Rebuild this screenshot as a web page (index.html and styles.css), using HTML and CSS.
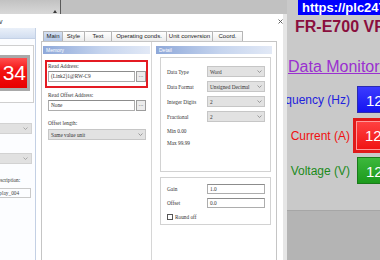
FILE: index.html
```html
<!DOCTYPE html>
<html>
<head>
<meta charset="utf-8">
<link rel="stylesheet" href="styles.css">
</head>
<body>
<div class="desktop">
  <div class="upper">
    <div class="behind">
      <div class="strip">
        <div class="strip-a"><svg class="tri" width="4" height="3" viewBox="0 0 4 3"><path d="M0 3 L2 0 L4 3 Z" fill="#3a3a3a"/></svg></div>
        <div class="strip-b"></div>
      </div>
    </div>
    <div class="page">
      <div class="banner">https://plc247.com</div>
      <h1 class="title">FR-E700 VFD</h1>
      <a class="link">Data Monitoring</a>
      <div class="meter m1">
        <div class="mlabel c-blue"><span>Frequency (Hz)</span></div>
        <div class="mval v-blue">12.5</div>
      </div>
      <div class="meter m2">
        <div class="mlabel c-red"><span>Current (A)</span></div>
        <div class="mval v-red">12.3</div>
      </div>
      <div class="meter m3">
        <div class="mlabel c-green"><span>Voltage (V)</span></div>
        <div class="mval v-green">12.0</div>
      </div>
    </div>
  </div>
  <div class="lower"></div>
</div>

<div class="dialog">
  <div class="titlebar">
    <span class="ttl">v</span>
    <svg class="close" width="5" height="5" viewBox="0 0 5 5"><path d="M0.5 0.5 L4.5 4.5 M4.5 0.5 L0.5 4.5" stroke="#555" stroke-width="0.9"/></svg>
  </div>
  <div class="dbody">
    <div class="side">
      <div class="side-head"></div>
      <div class="side-in">
        <div class="disp"><div class="red34">34</div></div>
        <div class="dd"><svg width="5" height="3" viewBox="0 0 5 3"><path d="M0.5 0.5 L2.5 2.5 L4.5 0.5" fill="none" stroke="#999" stroke-width="0.8"/></svg></div>
        <div class="dd dd2"><svg width="5" height="3" viewBox="0 0 5 3"><path d="M0.5 0.5 L2.5 2.5 L4.5 0.5" fill="none" stroke="#999" stroke-width="0.8"/></svg></div>
        <div class="slbl">Description:</div>
        <div class="stxt">Display_004</div>
      </div>
    </div>
    <div class="panel">
      <div class="tabs">
        <div class="tab on">Main</div>
        <div class="tab">Style</div>
        <div class="tab">Text</div>
        <div class="tab">Operating conds.</div>
        <div class="tab">Unit conversion</div>
        <div class="tab">Coord.</div>
      </div>
      <div class="content">
        <div class="mem">
          <div class="ghead">Memory</div>
          <div class="redgrp">
            <div class="lbl">Read Address:</div>
            <div class="irow">
              <div class="inp">(Link2)1@RW-C9</div>
              <div class="btn">...</div>
            </div>
          </div>
          <div class="fields">
            <div class="lbl l1">Read Offset Address:</div>
            <div class="irow">
              <div class="inp">None</div>
              <div class="btn">...</div>
            </div>
            <div class="lbl l2">Offset length:</div>
            <div class="sel wide"><span>Same value unit</span><svg width="5" height="3" viewBox="0 0 5 3"><path d="M0.5 0.5 L2.5 2.5 L4.5 0.5" fill="none" stroke="#888" stroke-width="0.8"/></svg></div>
          </div>
        </div>
        <div class="det">
          <div class="ghead">Detail</div>
          <div class="box">
            <div class="grid">
              <span class="lab">Data Type</span>
              <div class="sel"><span>Word</span><svg width="5" height="3" viewBox="0 0 5 3"><path d="M0.5 0.5 L2.5 2.5 L4.5 0.5" fill="none" stroke="#888" stroke-width="0.8"/></svg></div>
              <span class="lab">Data Format</span>
              <div class="sel"><span>Unsigned Decimal</span><svg width="5" height="3" viewBox="0 0 5 3"><path d="M0.5 0.5 L2.5 2.5 L4.5 0.5" fill="none" stroke="#888" stroke-width="0.8"/></svg></div>
              <span class="lab">Integer Digits</span>
              <div class="sel"><span>2</span><svg width="5" height="3" viewBox="0 0 5 3"><path d="M0.5 0.5 L2.5 2.5 L4.5 0.5" fill="none" stroke="#888" stroke-width="0.8"/></svg></div>
              <span class="lab">Fractional</span>
              <div class="sel"><span>2</span><svg width="5" height="3" viewBox="0 0 5 3"><path d="M0.5 0.5 L2.5 2.5 L4.5 0.5" fill="none" stroke="#888" stroke-width="0.8"/></svg></div>
            </div>
            <div class="note first">Min 0.00</div>
            <div class="note">Max 99.99</div>
          </div>
          <div class="box box2">
            <div class="grid grid2">
              <span class="lab">Gain</span>
              <div class="inp tin">1.0</div>
              <span class="lab">Offset</span>
              <div class="inp tin">0.0</div>
            </div>
            <div class="chk"><span class="cb"></span><span class="lab">Round off</span></div>
          </div>
        </div>
      </div>
    </div>
  </div>
</div>
</body>
</html>
```

FILE: styles.css
```css
* { box-sizing: border-box; }
html, body { margin: 0; padding: 0; }
body {
  width: 380px;
  height: 260px;
  overflow: hidden;
  position: relative;
  background: #c9c9c9;
  font-family: "Liberation Sans", Arial, sans-serif;
}

/* background desktop / web page */
.desktop { display: flex; flex-direction: column; height: 260px; }
.upper { display: grid; grid-template-columns: 287px 93px; height: 210px; }
.strip { display: flex; height: 14px; }
.strip-a {
  width: 61px;
  border-right: 1px solid #5a5a5a;
  background: linear-gradient(#c2c2c2, #d8d8d8);
  display: flex;
  justify-content: flex-end;
  align-items: flex-end;
  padding: 0 3px 1px 0;
}
.strip-b { flex: 1; background: #c1c1c1; }
.page { white-space: nowrap; min-width: 0; }
.banner {
  margin-left: 11px;
  height: 15px;
  background: #0000fe;
  color: #fff;
  font-weight: bold;
  font-size: 13px;
  line-height: 15px;
  padding-left: 4px;
  overflow: hidden;
}
.title {
  margin: 3px 0 0;
  padding-left: 8px;
  font-size: 16px;
  line-height: 18px;
  font-weight: bold;
  color: #8a0f3e;
}
.link {
  display: block;
  margin-top: 22px;
  padding-left: 1px;
  font-size: 16px;
  line-height: 18px;
  color: #9a30d0;
  text-decoration: underline;
}
.meter { display: flex; align-items: center; gap: 7px; height: 27px; }
.m1 { margin-top: 10px; }
.m2 { margin-top: 9px; }
.m3 { margin-top: 8px; }
.mlabel {
  width: 63px;
  flex: none;
  display: flex;
  justify-content: flex-end;
  font-size: 12px;
}
.c-blue { color: #2222dd; }
.c-red { color: #f01010; }
.c-green { color: #1b8a1b; }
.mval {
  width: 40px;
  flex: none;
  height: 27px;
  color: #fff;
  font-size: 15px;
  line-height: 27px;
  padding-left: 8px;
}
.v-blue { background: linear-gradient(#3b3bff, #1414f0); border: 1px solid #2a2ab0; }
.v-red {
  background: linear-gradient(#ff4040, #f01414);
  box-shadow: 0 0 0 1px #ff9a9a, 0 0 0 4px #e01a1a;
}
.v-green { background: linear-gradient(#3cb83c, #1c9a1c); border: 1px solid #1a7a1a; }
.lower { flex: 1; background: #b4b4b4; border-top: 1px solid #a6a6a6; }

/* dialog window */
.dialog {
  position: absolute;
  left: 0;
  top: 14px;
  width: 287px;
  height: 246px;
  background: #fff;
  border-right: 4px solid #e6e6e6;
  display: flex;
  flex-direction: column;
}
.titlebar {
  height: 14px;
  flex: none;
  display: flex;
  justify-content: space-between;
  align-items: center;
}
.ttl { font-size: 7px; color: #333; margin-left: -1px; }
.dbody { flex: 1; display: flex; min-height: 0; }

.side {
  width: 36px;
  flex: none;
  border-right: 1px solid #c3d0e4;
  background: #fcfdff;
  overflow: hidden;
}
.side-head {
  height: 11px;
  background: linear-gradient(#eaf0f9, #d2def0);
  border-bottom: 1px solid #c4d1e6;
}
.side-in { margin-left: -12px; width: 46px; }
.disp {
  margin-top: 6px;
  border: 1px solid #cfcfcf;
  padding: 9px 3px 11px 2px;
  background: #fff;
}
.red34 {
  height: 36px;
  border: 3px solid #a9a9a9;
  background: linear-gradient(#ff5050, #f41414 40%, #e80000);
  color: #fff;
  font-size: 21px;
  line-height: 30px;
  text-align: right;
  padding-right: 1px;
}
.dd {
  height: 11px;
  width: 44px;
  margin-top: 20px;
  background: #e1e1e1;
  border: 1px solid #d2d2d2;
  display: flex;
  justify-content: flex-end;
  align-items: center;
  padding-right: 3px;
}
.dd2 { margin-top: 19px; }
.slbl {
  margin-top: 13px;
  padding-left: 6px;
  font-family: "Liberation Serif", serif;
  font-size: 5.3px;
  line-height: 7px;
  color: #333;
  white-space: nowrap;
}
.stxt {
  margin: 4px 0 0 1px;
  width: 42px;
  height: 10px;
  border: 1px solid #c9c9c9;
  padding-left: 2px;
  font-family: "Liberation Serif", serif;
  font-size: 5.3px;
  line-height: 8px;
  color: #444;
  white-space: nowrap;
}

.panel {
  flex: 1;
  margin: 0 6px 0 5px;
  display: flex;
  flex-direction: column;
  min-width: 0;
}
.tabs {
  display: grid;
  grid-template-columns: 20px 22px 27px 55px 46px 30px;
  margin: 3px 0 0 2px;
  height: 10px;
}
.tab {
  font-size: 6px;
  line-height: 9px;
  text-align: center;
  color: #222;
  white-space: nowrap;
  background: linear-gradient(#ffffff, #ececec);
  border: 1px solid #b5b5b5;
  border-bottom: 0;
  border-left: 0;
  border-radius: 1px 1px 0 0;
}
.tab:first-child { border-left: 1px solid #b5b5b5; }
.tab.on { background: linear-gradient(#d4e0f2, #b4c7e6); }

.content {
  flex: 1;
  border: 1px solid #c5c5c5;
  border-bottom: 0;
  display: grid;
  grid-template-columns: 110px 1fr;
  background: #fff;
}
.ghead {
  height: 8px;
  line-height: 8px;
  font-size: 5px;
  color: #fff;
  padding-left: 3px;
  background: linear-gradient(to right, #8ea8d9, #c5d4ee 55%, #e2e9f6);
}
.mem { border-right: 1px solid #d6d6d6; padding: 4px 1px 0; }
.redgrp { margin: 6px 2px 0; border: 2px solid #e41b23; padding: 0 0 4px 1px; }
.lbl, .lab, .inp, .sel, .note {
  font-family: "Liberation Serif", serif;
  font-size: 5.3px;
  color: #333;
  white-space: nowrap;
}
.lbl { height: 8px; line-height: 8px; }
.l1 { margin-top: 3px; }
.l2 { margin-top: 8px; }
.irow { display: flex; gap: 1px; height: 11px; margin-top: 1px; }
.inp {
  flex: 1;
  background: #fff;
  border: 1px solid #adadad;
  border-top-color: #8c8c8c;
  line-height: 9px;
  padding-left: 2px;
  overflow: hidden;
}
.btn {
  width: 10px;
  border: 1px solid #9c9c9c;
  background: #ececec;
  font-size: 6px;
  line-height: 7px;
  text-align: center;
  color: #333;
}
.fields { padding: 0 4px 0 5px; }
.sel {
  height: 11px;
  background: #e2e2e2;
  border: 1px solid #c6c6c6;
  display: flex;
  justify-content: space-between;
  align-items: center;
  padding: 0 2px;
}
.wide { margin-top: 2px; }

.det { padding: 4px 4px 0; }
.box {
  margin: 3px 1px 0 4px;
  border: 1px solid #d2d2d2;
  height: 115px;
  padding: 8px 0 0 6px;
}
.grid {
  display: grid;
  grid-template-columns: 40px 58px;
  grid-auto-rows: 11px;
  row-gap: 4px;
  align-items: center;
}
.grid .sel, .grid .inp { height: 100%; }
.note { line-height: 12px; }
.note.first { margin-top: 3px; }
.box2 { height: 48px; margin-top: 5px; padding-top: 6px; }
.grid2 { grid-auto-rows: 10px; }
.tin { line-height: 8px; }
.chk { margin-top: 5px; display: flex; align-items: center; gap: 2px; height: 8px; }
.cb { width: 6px; height: 6px; border: 1px solid #555; background: #fff; }
```
